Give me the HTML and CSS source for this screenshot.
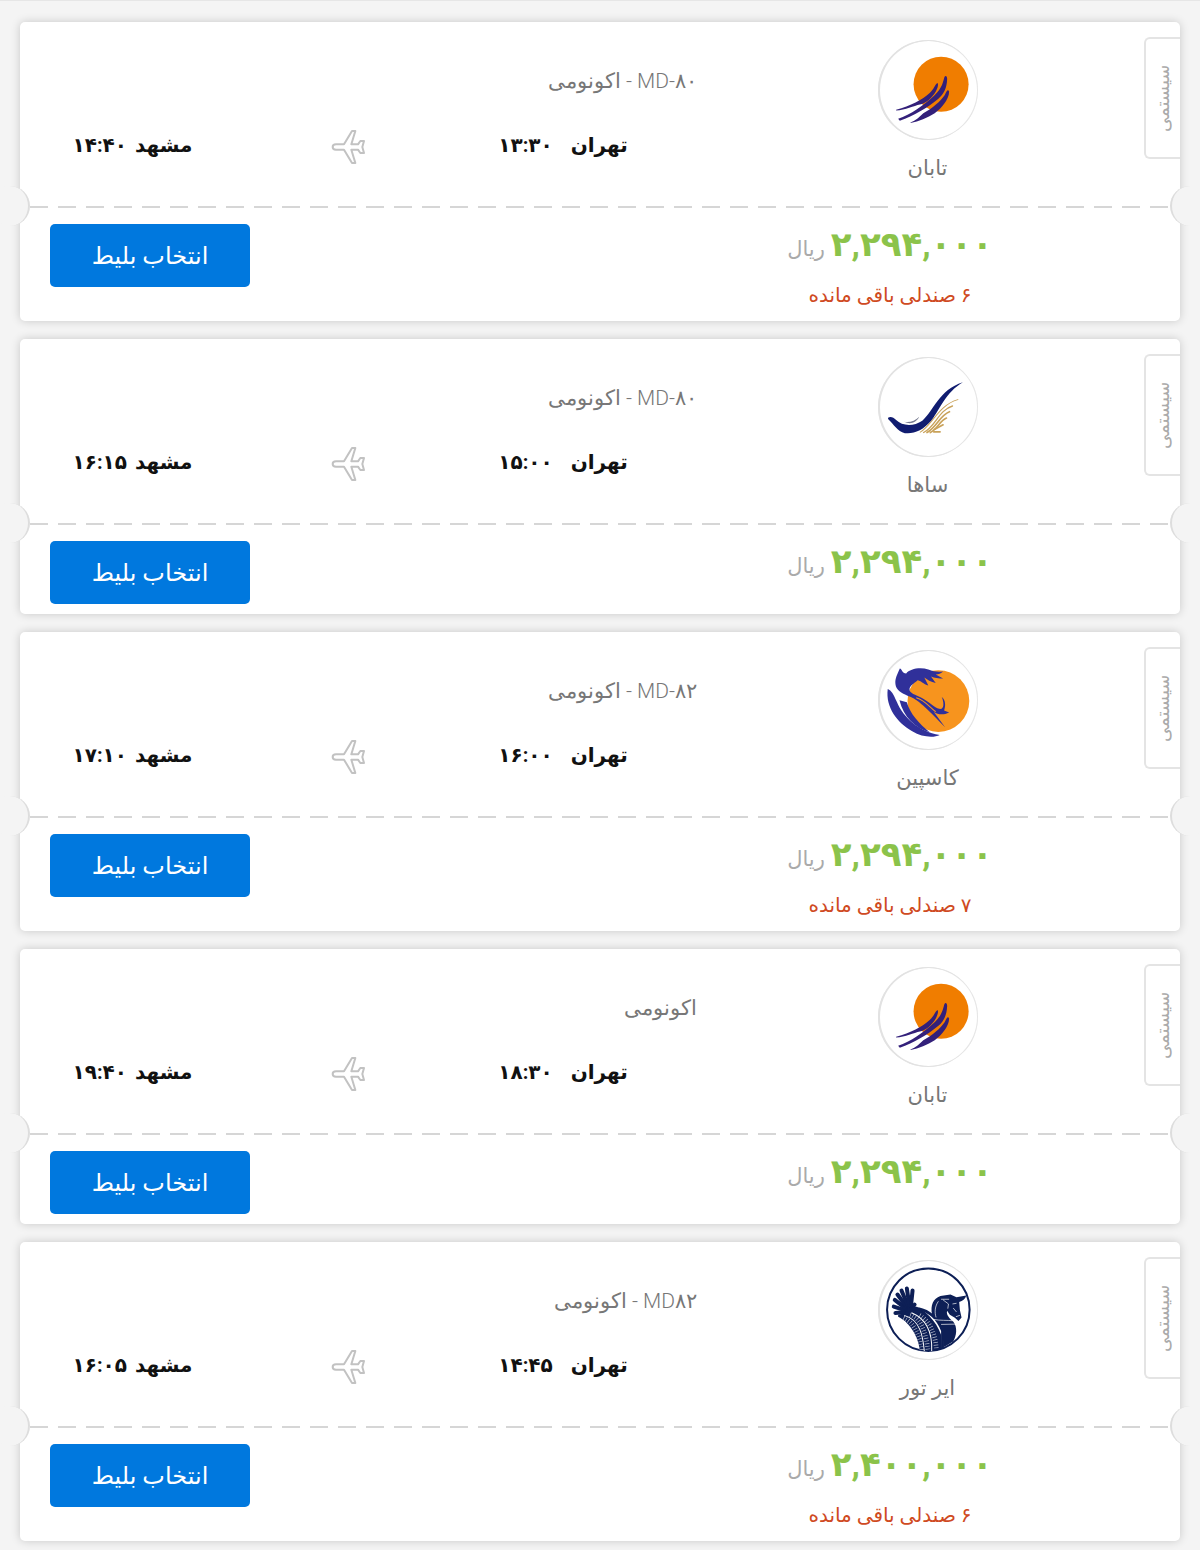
FILE: index.html
```
<!DOCTYPE html>
<html lang="fa" dir="rtl">
<head>
    <meta charset="UTF-8">
    <meta name="viewport" content="width=device-width, initial-scale=1.0">
    <title>بلیط هواپیما تهران مشهد</title>
    <link rel="stylesheet" href="styles.css">
</head>
<body>
    <!-- Shared icons -->
    <svg class="sprite" aria-hidden="true">
        <symbol id="plane" viewBox="0 0 108 108">
            <path d="M8 54 Q8 46 18 46 L42 46 L66 6 L76 6 L64 46 L84 46 L91 36 L102 36 L97 54 L102 72 L91 72 L84 62 L64 62 L76 102 L66 102 L42 62 L18 62 Q8 62 8 54 Z" fill="none" stroke="#c2c2c2" stroke-width="6" stroke-linejoin="round"/>
        </symbol>
        <symbol id="taban" viewBox="53 58 298 298">
            <circle cx="241" cy="190" r="82" fill="#f07d00"/>
            <g fill="#33207a">
                <path d="M107 266 C150 254 185 236 207 216 C220 204 222 192 230 186 C234 190 231 200 226 210 C214 232 194 248 178 250 C160 254 135 266 107 268 Z"/>
                <path d="M113 293 C150 280 190 252 220 224 C246 200 247 180 251 168 C255 162 260 168 259 176 C258 200 250 220 232 234 C200 260 160 284 118 299 Z"/>
                <path d="M150 304 C165 298 178 286 188 276 C215 262 240 240 252 222 C258 208 262 204 265 212 C264 235 244 260 222 276 C200 290 175 300 150 305 Z"/>
            </g>
        </symbol>
    </svg>

    <main class="ticket-list">
        <article class="ticket">
            <span class="ticket-type">سیستمی</span>
            <div class="ticket-top">
                <div class="airline">
                    <svg class="logo" role="img" aria-label="تابان"><use href="#taban"/></svg>
                    <p class="airline-name">تابان</p>
                </div>
                <div class="origin">
                    <p class="aircraft">MD-۸۰ - اکونومی</p>
                    <p class="place"><span>تهران</span><time>۱۳:۳۰</time></p>
                </div>
                <svg class="plane" aria-hidden="true"><use href="#plane"/></svg>
                <p class="place destination"><span>مشهد</span><time>۱۴:۴۰</time></p>
            </div>
            <div class="ticket-bottom">
                <div class="fare">
                    <p class="price"><strong>۲,۲۹۴,۰۰۰</strong><span>ریال</span></p>
                    <p class="seats">۶ صندلی باقی مانده</p>
                </div>
                <button class="btn" type="button">انتخاب بلیط</button>
            </div>
        </article>

        <article class="ticket">
            <span class="ticket-type">سیستمی</span>
            <div class="ticket-top">
                <div class="airline">
                    <svg class="logo" viewBox="24 32 298 298" role="img" aria-label="ساها">
                        <g fill="none" stroke="#c9a25a" stroke-linecap="round">
                            <path d="M150 256 C185 235 205 175 262 159" stroke-width="3"/>
                            <path d="M160 257 C195 240 205 190 246 178" stroke-width="4"/>
                            <path d="M170 257 C200 240 208 206 237 195" stroke-width="5"/>
                            <path d="M180 257 C202 246 208 222 228 214" stroke-width="5"/>
                            <path d="M192 248 L218 234 M190 255 L209 255" stroke-width="5"/>
                        </g>
                        <path d="M54 213 C62 208 70 212 78 220 C96 238 130 240 156 222 C190 192 205 130 277 107 C225 138 210 185 184 220 C158 252 130 262 104 259 C82 254 70 232 54 217 Z" fill="#101c70"/>
                        <path d="M102 225 C120 228 134 222 147 210 C138 228 120 234 102 225 Z" fill="#777b91"/>
                    </svg>
                    <p class="airline-name">ساها</p>
                </div>
                <div class="origin">
                    <p class="aircraft">MD-۸۰ - اکونومی</p>
                    <p class="place"><span>تهران</span><time>۱۵:۰۰</time></p>
                </div>
                <svg class="plane" aria-hidden="true"><use href="#plane"/></svg>
                <p class="place destination"><span>مشهد</span><time>۱۶:۱۵</time></p>
            </div>
            <div class="ticket-bottom">
                <div class="fare">
                    <p class="price"><strong>۲,۲۹۴,۰۰۰</strong><span>ریال</span></p>
                </div>
                <button class="btn" type="button">انتخاب بلیط</button>
            </div>
        </article>

        <article class="ticket">
            <span class="ticket-type">سیستمی</span>
            <div class="ticket-top">
                <div class="airline">
                    <svg class="logo" viewBox="24 28 298 298" role="img" aria-label="کاسپین">
                        <circle cx="204" cy="180" r="92" fill="#f7941e"/>
                        <g fill="#30309a">
                            <path d="M89 83 C94 82 96 98 108 98 C118 84 150 78 174 86 C190 92 200 94 218 92 C212 98 204 100 196 101 L218 113 C205 113 192 111 182 107 L196 126 C182 124 170 116 162 110 L174 134 C160 130 150 118 142 118 C132 128 116 134 118 148 C122 160 144 164 160 174 C186 190 196 204 212 204 C222 200 220 182 214 168 C226 178 226 194 221 208 L236 214 C220 222 204 222 190 212 L224 258 C205 240 190 222 172 206 C155 190 140 174 112 164 C92 156 78 146 76 130 C74 112 82 100 89 83 Z"/>
                            <path d="M53 144 C64 148 70 160 80 182 C100 230 145 270 208 281 C190 290 155 288 126 270 C82 244 46 200 53 144 Z"/>
                            <path d="M88 178 L110 184 C118 216 148 250 178 273 C135 262 100 228 88 178 Z"/>
                        </g>
                        <path d="M138 170 C166 178 178 200 196 212" fill="none" stroke="#f7941e" stroke-width="3"/>
                    </svg>
                    <p class="airline-name">کاسپین</p>
                </div>
                <div class="origin">
                    <p class="aircraft">MD-۸۲ - اکونومی</p>
                    <p class="place"><span>تهران</span><time>۱۶:۰۰</time></p>
                </div>
                <svg class="plane" aria-hidden="true"><use href="#plane"/></svg>
                <p class="place destination"><span>مشهد</span><time>۱۷:۱۰</time></p>
            </div>
            <div class="ticket-bottom">
                <div class="fare">
                    <p class="price"><strong>۲,۲۹۴,۰۰۰</strong><span>ریال</span></p>
                    <p class="seats">۷ صندلی باقی مانده</p>
                </div>
                <button class="btn" type="button">انتخاب بلیط</button>
            </div>
        </article>

        <article class="ticket">
            <span class="ticket-type">سیستمی</span>
            <div class="ticket-top">
                <div class="airline">
                    <svg class="logo" role="img" aria-label="تابان"><use href="#taban"/></svg>
                    <p class="airline-name">تابان</p>
                </div>
                <div class="origin">
                    <p class="aircraft">اکونومی</p>
                    <p class="place"><span>تهران</span><time>۱۸:۳۰</time></p>
                </div>
                <svg class="plane" aria-hidden="true"><use href="#plane"/></svg>
                <p class="place destination"><span>مشهد</span><time>۱۹:۴۰</time></p>
            </div>
            <div class="ticket-bottom">
                <div class="fare">
                    <p class="price"><strong>۲,۲۹۴,۰۰۰</strong><span>ریال</span></p>
                </div>
                <button class="btn" type="button">انتخاب بلیط</button>
            </div>
        </article>

        <article class="ticket">
            <span class="ticket-type">سیستمی</span>
            <div class="ticket-top">
                <div class="airline">
                    <svg class="logo" viewBox="24 27 298 298" role="img" aria-label="ایر تور">
                        <circle cx="174" cy="175" r="123" fill="none" stroke="#0d1f56" stroke-width="6"/>
                        <!-- wing feathers -->
                        <g stroke="#0d1f56" stroke-width="12" stroke-linecap="round">
                            <path d="M108 182 L76 185"/>
                            <path d="M108 178 L71 166"/>
                            <path d="M110 174 L74 146"/>
                            <path d="M112 170 L82 130"/>
                            <path d="M115 168 L94 118"/>
                            <path d="M118 166 L110 112"/>
                            <path d="M122 166 L127 118"/>
                            <path d="M118 180 L133 160"/>
                        </g>
                        <path d="M84 190 C100 188 114 178 120 168 L140 166 C160 176 198 206 212 250 L214 292 C190 300 166 300 148 295 C146 262 122 214 84 196 Z" fill="#0d1f56"/>
                        <path d="M102 192 C150 205 158 255 162 298 M124 184 C172 204 186 250 184 298" fill="none" stroke="#fff" stroke-width="3"/>
                        <path d="M120 190 C150 200 166 236 173 296 M148 192 C180 210 196 250 198 296 M100 200 C130 212 148 250 154 296" fill="none" stroke="#fff" stroke-width="14" stroke-dasharray="2 6" opacity="0.7"/>
                        <path d="M144 172 C172 178 200 196 216 238 L216 290" fill="none" stroke="#0d1f56" stroke-width="8"/>
                        <!-- bull head and body -->
                        <path d="M185 190 C180 160 188 142 210 134 L240 130 L258 138 L287 133 C284 144 276 150 266 152 L268 176 L273 198 L264 209 L252 198 L238 190 L230 178 C226 190 238 202 248 210 C262 228 258 252 248 270 L218 288 C220 240 212 216 185 190 Z" fill="#0d1f56"/>
                        <path d="M204 150 C194 164 192 182 197 198 M218 146 L234 158 L232 172 M190 204 C210 208 230 206 246 208 M212 219 L256 218 M246 158 L258 156 M248 170 L258 182 M256 196 L268 192 M212 144 L236 144" fill="none" stroke="#fff" stroke-width="2"/>
                    </svg>
                    <p class="airline-name">ایر تور</p>
                </div>
                <div class="origin">
                    <p class="aircraft">MD۸۲ - اکونومی</p>
                    <p class="place"><span>تهران</span><time>۱۴:۴۵</time></p>
                </div>
                <svg class="plane" aria-hidden="true"><use href="#plane"/></svg>
                <p class="place destination"><span>مشهد</span><time>۱۶:۰۵</time></p>
            </div>
            <div class="ticket-bottom">
                <div class="fare">
                    <p class="price"><strong>۲,۴۰۰,۰۰۰</strong><span>ریال</span></p>
                    <p class="seats">۶ صندلی باقی مانده</p>
                </div>
                <button class="btn" type="button">انتخاب بلیط</button>
            </div>
        </article>
    </main>
</body>
</html>
```
FILE: styles.css
```
*,
*::before,
*::after {
    box-sizing: border-box;
}

body {
    margin: 0;
    background-color: #f4f4f4;
    border-top: 1px solid #e6e6e6;
    font-family: Roboto, 'DejaVu Sans', sans-serif;
    color: #777;
}

p {
    margin: 0;
}

.sprite {
    display: none;
}

.ticket-list {
    display: flex;
    flex-direction: column;
    gap: 18px;
    padding: 21px 20px 11px;
}

.ticket {
    position: relative;
    background: #fff;
    border-radius: 5px;
    box-shadow: 0 0 10px rgba(0, 0, 0, 0.18);
}

/* Vertical tab on the edge of the card */
.ticket-type {
    position: absolute;
    top: 15px;
    right: 0;
    width: 36px;
    height: 122px;
    border: 2px solid #e4e4e4;
    border-left: 0;
    border-radius: 0 6px 6px 0;
    writing-mode: vertical-rl;
    transform: rotate(180deg);
    text-align: center;
    line-height: 34px;
    font-size: 18px;
    color: #aaa;
}

.ticket-top {
    position: relative;
    display: grid;
    grid-template-columns: 483fr 268fr 162fr 247fr;
    height: 184px;
}

/* Half circles cut out at both ends of the dashed line */
.ticket-top::before,
.ticket-top::after {
    content: '';
    position: absolute;
    bottom: -20px;
    width: 40px;
    height: 40px;
    background: #f4f4f4;
    border-radius: 50%;
}

.ticket-top::before {
    right: -30px;
    border-left: 2px solid #ddd;
}

.ticket-top::after {
    left: -30px;
    border-right: 2px solid #ddd;
}

.airline {
    display: flex;
    flex-direction: column;
    align-items: center;
    padding: 18px 22px 0 0;
}

.logo {
    width: 100px;
    height: 100px;
    border-radius: 50%;
    box-shadow: inset 1px 0 0 1px #e2e2e2, inset 0 0 0 1px #e6e6e6;
}

.airline-name {
    margin-top: 12px;
    font-size: 21px;
    line-height: 32px;
}

.origin {
    padding-top: 43px;
}

.aircraft {
    font-size: 21px;
    font-weight: 300;
    line-height: 32px;
}

.place {
    display: flex;
    justify-content: center;
    gap: 18px;
    font-size: 20px;
    font-weight: 700;
    line-height: 32px;
    color: #111;
}

.origin .place {
    margin-top: 32px;
}

.destination {
    gap: 8px;
    padding: 107px 22px 0 0;
}

.plane {
    width: 36px;
    height: 36px;
    margin-top: 107px;
    justify-self: center;
}

.ticket-bottom {
    display: flex;
    justify-content: space-between;
    align-items: flex-start;
    padding: 18px 160px 10px 30px;
    background: repeating-linear-gradient(to right, #d6d6d6 0, #d6d6d6 18px, transparent 18px, transparent 28px) 10px 0 / calc(100% - 20px) 2px no-repeat;
}

.fare {
    min-width: 260px;
    text-align: center;
}

.price {
    display: flex;
    justify-content: center;
    align-items: baseline;
    gap: 6px;
    line-height: 40px;
}

.price strong {
    font-size: 34px;
    color: #8bc34a;
}

.price span {
    font-size: 21px;
    color: #aaa;
}

.seats {
    margin-top: 10px;
    font-size: 20px;
    line-height: 32px;
    color: #cf4a22;
}

.btn {
    width: 200px;
    height: 63px;
    border: none;
    border-radius: 5px;
    background-color: #0078de;
    color: #fff;
    font-family: inherit;
    font-size: 24px;
    cursor: pointer;
}

.btn:hover {
    background-color: #006bc7;
}
```
